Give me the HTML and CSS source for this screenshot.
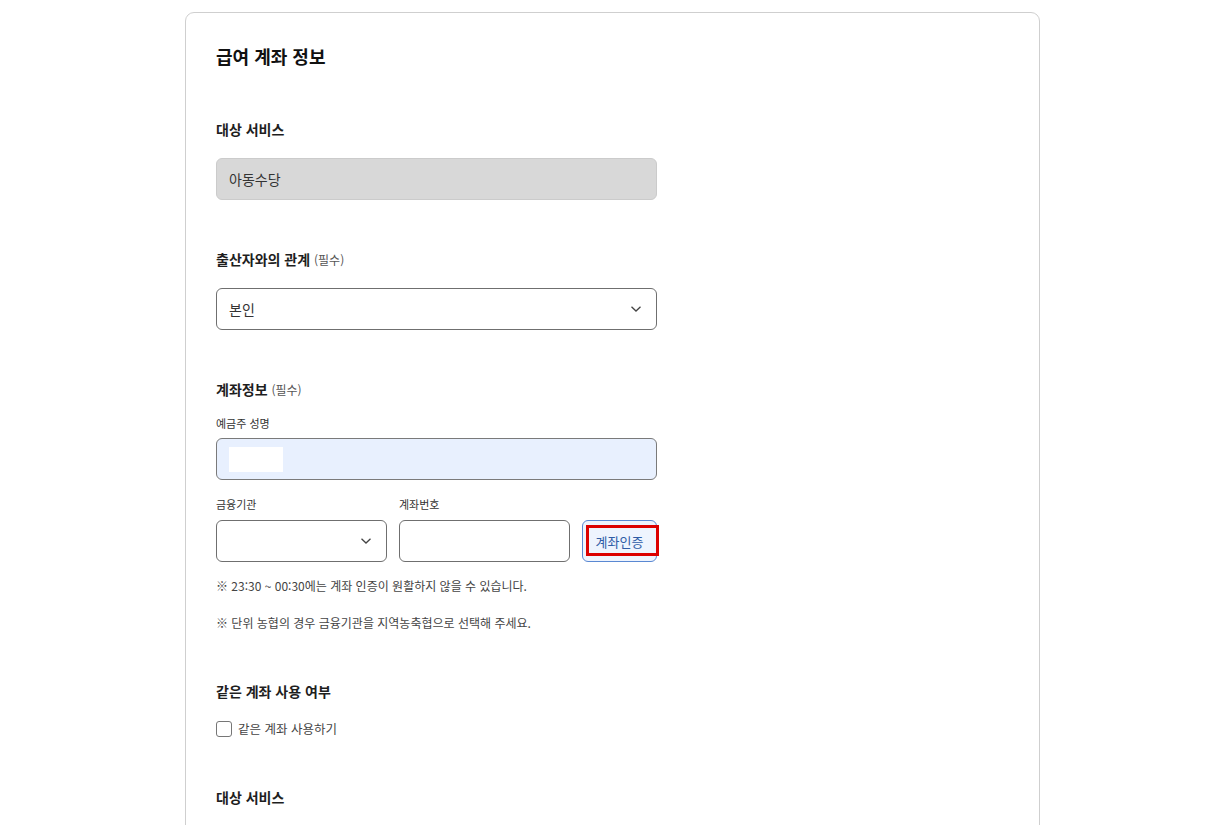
FILE: index.html
```html
<!DOCTYPE html>
<html lang="ko">
<head>
<meta charset="utf-8">
<title>급여 계좌 정보</title>
<link rel="stylesheet" href="styles.css">
</head>
<body>
<div class="card">
  <h1 class="title">급여 계좌 정보</h1>

  <section class="section first">
    <div class="label">대상 서비스</div>
    <div class="field disabled">아동수당</div>
  </section>

  <section class="section">
    <div class="label">출산자와의 관계 <span class="req">(필수)</span></div>
    <div class="field select">
      <span>본인</span>
      <svg class="chev" width="12" height="8" viewBox="0 0 12 8"><path d="M1.5 1.8 L6 6 L10.5 1.8" fill="none" stroke="#444" stroke-width="1.3"/></svg>
    </div>
  </section>

  <section class="section">
    <div class="label">계좌정보 <span class="req">(필수)</span></div>
    <div class="sublabel">예금주 성명</div>
    <div class="field autofill"><span class="mask"></span></div>

    <div class="row">
      <div class="col bank">
        <div class="sublabel">금융기관</div>
        <div class="field select">
          <span></span>
          <svg class="chev" width="12" height="8" viewBox="0 0 12 8"><path d="M1.5 1.8 L6 6 L10.5 1.8" fill="none" stroke="#444" stroke-width="1.3"/></svg>
        </div>
      </div>
      <div class="col acct">
        <div class="sublabel">계좌번호</div>
        <div class="field"></div>
      </div>
      <div class="col btncol">
        <button class="verify">계좌인증<span class="highlight"></span></button>
      </div>
    </div>

    <p class="note n1">※ 23:30 ~ 00:30에는 계좌 인증이 원활하지 않을 수 있습니다.</p>
    <p class="note n2">※ 단위 농협의 경우 금융기관을 지역농축협으로 선택해 주세요.</p>
  </section>

  <section class="section">
    <div class="label">같은 계좌 사용 여부</div>
    <label class="check"><span class="box"></span>같은 계좌 사용하기</label>
  </section>

  <section class="section last">
    <div class="label">대상 서비스</div>
  </section>
</div>
</body>
</html>
```

FILE: styles.css
```css
* { box-sizing: border-box; }
html, body { margin: 0; padding: 0; background: #fff; }
body {
  font-family: "Noto Sans CJK KR", "Noto Sans", sans-serif;
  color: #222;
}
.card {
  width: 855px;
  margin: 12px 0 0 185px;
  border: 1px solid #cfcfcf;
  border-radius: 9px;
  padding: 29px 30px 60px 30px;
  min-height: 900px;
}
.title {
  margin: 0;
  font-size: 18px;
  line-height: 28px;
  font-weight: 700;
  color: #111;
}
.section { margin-top: 49px; width: 441px; }
.section.first { margin-top: 49px; }
.label {
  font-size: 14px;
  line-height: 20px;
  font-weight: 700;
  color: #1e1e1e;
}
.req { font-size: 12px; font-weight: 400; color: #555; }
.field {
  height: 42px;
  border: 1px solid #6f6f6f;
  border-radius: 6px;
  padding: 0 12px;
  display: flex;
  align-items: center;
  font-size: 14px;
  color: #333;
  background: #fff;
}
.section > .label + .field { margin-top: 18px; }
.section.first > .label + .field { margin-top: 19px; }
.field.disabled {
  background: #d8d8d8;
  border-color: #cbcbcb;
  color: #333;
}
.field.select { justify-content: space-between; padding-right: 14px; }
.chev { display: block; }
.sublabel {
  font-size: 11px;
  line-height: 16px;
  color: #333;
}
.label + .sublabel { margin-top: 15px; }
.sublabel + .field { margin-top: 7px; }
.field.autofill { background: #e8f0fe; border-color: #7a7a7a; }
.mask { display: block; width: 54px; height: 25px; background: #fff; }
.row {
  display: flex;
  gap: 12px;
  margin-top: 16px;
  align-items: flex-end;
}
.col.bank, .col.acct { width: 171px; }
.col .sublabel + .field { margin-top: 8px; }
.col.btncol { width: 75px; }
.verify {
  position: relative;
  width: 75px;
  height: 42px;
  border: 1px solid #5a88d2;
  border-radius: 6px;
  background: #eef4fe;
  color: #2f5ca6;
  font-family: inherit;
  font-size: 13px;
  padding: 0;
  cursor: pointer;
}
.highlight {
  position: absolute;
  left: 3px;
  top: 4px;
  width: 73px;
  height: 31px;
  border: 3px solid #dc0000;
  pointer-events: none;
}
.note {
  margin: 0;
  font-size: 12px;
  line-height: 18px;
  color: #444;
}
.note.n1 { margin-top: 15px; }
.note.n2 { margin-top: 19px; }
.check {
  display: flex;
  align-items: center;
  gap: 6px;
  margin-top: 19px;
  font-size: 12.5px;
  color: #444;
  line-height: 18px;
}
.box {
  width: 16px;
  height: 16px;
  border: 1px solid #767676;
  border-radius: 3px;
  background: #fff;
}
```
